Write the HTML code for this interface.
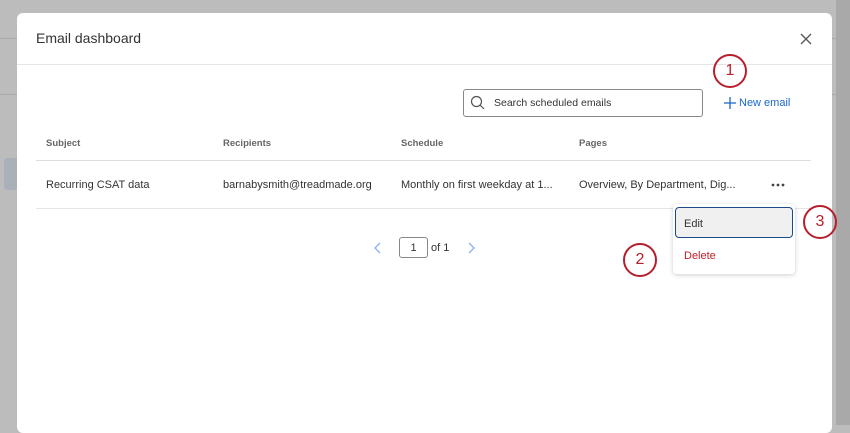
<!DOCTYPE html>
<html><head><style>
body{margin:0;width:850px;height:425px;overflow:hidden;background:#bcbcbc;font-family:"Liberation Sans",sans-serif;position:relative}
.a{position:absolute}
.modal{left:17px;top:13px;width:815px;height:420px;background:#fff;border-radius:6px}
.t{font-size:11px;color:#333}
.h{font-size:9.5px;font-weight:bold;color:#666}
.circ{width:34px;height:34px;border:2.5px solid #b81f2d;border-radius:50%;box-sizing:border-box;color:#b81f2d;font-size:16px;text-align:center;line-height:30px;background:transparent}
</style></head><body>
<div class="a" style="left:0;top:38px;width:17px;height:1px;background:#aaa"></div>
<div class="a" style="left:832px;top:38px;width:18px;height:1px;background:#aaa"></div>
<div class="a" style="left:0;top:94px;width:17px;height:1px;background:#aaa"></div>
<div class="a" style="left:832px;top:94px;width:18px;height:1px;background:#aaa"></div>
<div class="a" style="left:4px;top:158px;width:13px;height:32px;background:#aab0b8;border-radius:3px 0 0 3px"></div>
<div class="a" style="left:836px;top:0;width:14px;height:425px;background:#a9a9a9"></div>
<div class="a modal"></div>
<div class="a" style="left:36px;top:30px;font-size:14px;color:#333">Email dashboard</div>
<svg class="a" style="left:799px;top:32px" width="14" height="14"><path d="M2 2L12 12M12 2L2 12" stroke="#555" stroke-width="1.3"/></svg>
<div class="a" style="left:17px;top:64px;width:815px;height:1px;background:#e5e5e5"></div>
<div class="a" style="left:463px;top:89px;width:240px;height:28px;border:1px solid #888;border-radius:3px;box-sizing:border-box"></div>
<svg class="a" style="left:470px;top:95px" width="16" height="16"><circle cx="6.5" cy="6.5" r="5" stroke="#555" fill="none" stroke-width="1.2"/><path d="M10 10L14 14" stroke="#555" stroke-width="1.2"/></svg>
<div class="a t" style="left:494px;top:97px;font-size:10.5px">Search scheduled emails</div>
<svg class="a" style="left:723px;top:96px" width="14" height="14"><path d="M7 1V13M1 7H13" stroke="#1a66cc" stroke-width="1.3"/></svg>
<div class="a" style="left:739px;top:97px;font-size:11px;color:#1a66cc">New email</div>
<div class="a circ" style="left:713px;top:54px">1</div>
<div class="a h" style="left:46px;top:138px">Subject</div>
<div class="a h" style="left:223px;top:138px">Recipients</div>
<div class="a h" style="left:401px;top:138px">Schedule</div>
<div class="a h" style="left:579px;top:138px">Pages</div>
<div class="a" style="left:36px;top:160px;width:775px;height:1px;background:#ddd"></div>
<div class="a t" style="left:46px;top:179px">Recurring CSAT data</div>
<div class="a t" style="left:223px;top:179px">barnabysmith@treadmade.org</div>
<div class="a t" style="left:401px;top:179px">Monthly on first weekday at 1...</div>
<div class="a t" style="left:579px;top:179px">Overview, By Department, Dig...</div>
<svg class="a" style="left:771px;top:182px" width="16" height="6"><circle cx="2" cy="3" r="1.4" fill="#444"/><circle cx="7" cy="3" r="1.4" fill="#444"/><circle cx="12" cy="3" r="1.4" fill="#444"/></svg>
<div class="a" style="left:36px;top:208px;width:775px;height:1px;background:#e5e5e5"></div>
<svg class="a" style="left:373px;top:241px" width="10" height="14"><path d="M7 2L2 7L7 12" stroke="#8ab4f0" fill="none" stroke-width="1.4"/></svg>
<div class="a" style="left:399px;top:237px;width:29px;height:21px;border:1px solid #888;border-radius:3px;box-sizing:border-box;text-align:center;font-size:11px;line-height:20px;color:#333">1</div>
<div class="a t" style="left:431px;top:242px">of 1</div>
<svg class="a" style="left:466px;top:241px" width="10" height="14"><path d="M3 2L8 7L3 12" stroke="#8ab4f0" fill="none" stroke-width="1.4"/></svg>
<div class="a" style="left:673px;top:204px;width:122px;height:70px;background:#fff;border-radius:4px;box-shadow:0 1px 5px rgba(0,0,0,.2)"></div>
<div class="a" style="left:675px;top:207px;width:118px;height:31px;background:#f0f0f0;border:1.5px solid #1a4a8c;border-radius:4px;box-sizing:border-box"></div>
<div class="a t" style="left:684px;top:218px">Edit</div>
<div class="a" style="left:684px;top:250px;font-size:11px;color:#c0202a">Delete</div>
<div class="a circ" style="left:623px;top:243px">2</div>
<div class="a circ" style="left:803px;top:205px">3</div>
</body></html>
